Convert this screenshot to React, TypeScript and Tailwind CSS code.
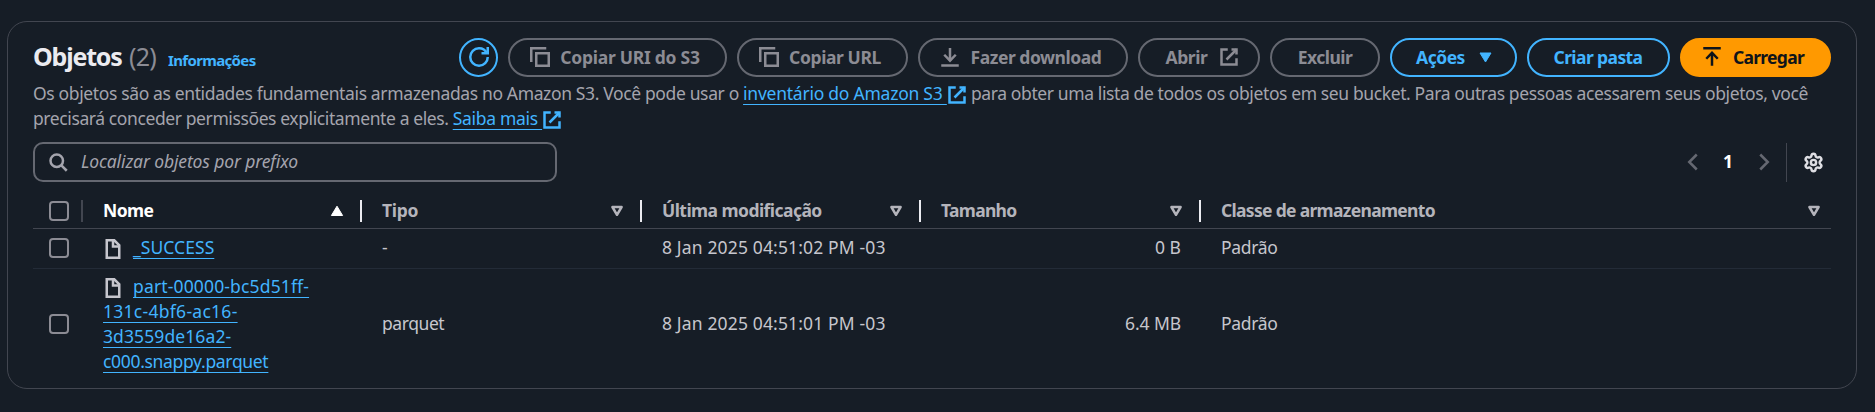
import type { ReactNode } from "react";
import { Settings } from "lucide-react";

type IconName = "refresh" | "copy" | "external" | "download" | "upload" | "search" | "file" | "left" | "right";

const iconPaths: Record<IconName, ReactNode> = {
  refresh: (
    <>
      <path d="M10 5h5V0" />
      <path d="M15 8a6.957 6.957 0 0 1-7 7 6.957 6.957 0 0 1-7-7 6.957 6.957 0 0 1 7-7 6.87 6.87 0 0 1 6.3 4" />
    </>
  ),
  copy: (
    <>
      <path d="M15 5H5v10h10V5Z" />
      <path d="M13 1H1v11" />
    </>
  ),
  external: (
    <>
      <path d="M10 2h4v4" />
      <path d="m6 10 8-8" />
      <path d="M14 9.048V14H2V2h5" />
    </>
  ),
  download: (
    <>
      <path d="M1 14.8h14" />
      <path d="M8 .8v10.4" />
      <path d="m3.4 6.2 4.6 4.7 4.6-4.7" />
    </>
  ),
  upload: (
    <>
      <path d="M1 1h14" />
      <path d="M8 15V4.6" />
      <path d="M3.4 9.4 8 4.7l4.6 4.7" />
    </>
  ),
  search: (
    <>
      <circle cx="7" cy="7" r="5" />
      <path d="m15 15-4.5-4.5" />
    </>
  ),
  file: (
    <>
      <path d="M13 15H3V1h6l4 4v10Z" />
      <path d="M8 1v5h5" />
    </>
  ),
  left: <path d="M11 2 5 8l6 6" />,
  right: <path d="m5 2 6 6-6 6" />,
};

function Icon({ name, className = "" }: { name: IconName; className?: string }) {
  return (
    <svg
      viewBox="0 0 16 16"
      fill="none"
      stroke="currentColor"
      strokeWidth="2"
      className={`size-5 shrink-0 overflow-visible ${className}`}
    >
      {iconPaths[name]}
    </svg>
  );
}

function Button({ className, children }: { className: string; children: ReactNode }) {
  return (
    <button
      className={`flex h-[39px] shrink-0 items-center justify-center rounded-full border-2 pb-px font-bold whitespace-nowrap ${className}`}
    >
      {children}
    </button>
  );
}

function Link({ className, children }: { className: string; children: ReactNode }) {
  return (
    <a
      className={`text-[#42b4ff] underline decoration-1 underline-offset-4 [text-decoration-skip-ink:none] ${className}`}
    >
      {children}
    </a>
  );
}

function Checkbox() {
  return <span className="ml-4 block size-5 rounded-[4px] border-2 border-[#8c8c94]" />;
}

function SortArrow({ active = false }: { active?: boolean }) {
  return active ? (
    <svg width="14" height="12" viewBox="0 0 14 12" fill="#fff" stroke="#fff" strokeLinejoin="round">
      <path d="M7 1.2 12.6 10.5H1.4Z" />
    </svg>
  ) : (
    <svg width="14" height="12" viewBox="0 0 14 12" fill="none" stroke="#b4b4bb" strokeWidth="2.5" strokeLinejoin="round">
      <path d="M2.4 2h9.2L7 9.8Z" />
    </svg>
  );
}

const columns = [
  { label: "Nome", track: "tracking-[-0.6px] text-white", active: true },
  { label: "Tipo", track: "tracking-[-0.3px]" },
  { label: "Última modificação", track: "tracking-[-0.55px]" },
  { label: "Tamanho", track: "tracking-[-0.7px]" },
  { label: "Classe de armazenamento", track: "tracking-[-0.69px]" },
];

const grid = "grid grid-cols-[50px_279px_280px_279px_280px_630px]";

export default function App() {
  return (
    <main className="h-[412px] w-[1875px] overflow-hidden bg-[#161d26] pt-[21px] pl-[7px] font-['Noto_Sans',sans-serif] text-[17.5px] leading-[25px] text-[#c6c6cd]">
      <section className="h-[368px] w-[1850px] rounded-[20px] border border-[#424650] pt-4 pr-[25px] pl-[25px]">
        <header className="flex h-[39px] items-center justify-between">
          <div className="flex items-baseline pb-0.5 whitespace-nowrap">
            <h2 className="w-24 text-[25px] leading-[30px] font-bold tracking-[-1.2px] text-[#ebebf0]">Objetos</h2>
            <span className="w-[39px] text-[25px] leading-[30px] tracking-[-0.8px] text-[#8c8c94]">(2)</span>
            <a className="text-[15px] font-bold tracking-[-0.65px] text-[#42b4ff]">Informações</a>
          </div>
          <div className="flex gap-2.5">
            <Button className="w-[39px] border-[#42b4ff] text-[#42b4ff]">
              <Icon name="refresh" />
            </Button>
            <Button className="w-[219px] gap-2.5 border-[#656871] pr-[5px] tracking-[-0.26px] text-[#8c8c94]">
              <Icon name="copy" />
              Copiar URI do S3
            </Button>
            <Button className="w-[171px] gap-2.5 border-[#656871] pr-[5px] tracking-[-0.4px] text-[#8c8c94]">
              <Icon name="copy" />
              Copiar URL
            </Button>
            <Button className="w-[210px] gap-[11px] border-[#656871] pr-[5px] tracking-[-0.46px] text-[#8c8c94]">
              <Icon name="download" />
              Fazer download
            </Button>
            <Button className="w-[122px] gap-[11px] border-[#656871] pl-[6px] tracking-[-0.4px] text-[#8c8c94]">
              Abrir
              <Icon name="external" />
            </Button>
            <Button className="w-[110px] border-[#656871] tracking-[-0.5px] text-[#8c8c94]">Excluir</Button>
            <Button className="w-[127px] gap-3.5 border-[#42b4ff] pl-px tracking-[-0.5px] text-[#42b4ff]">
              Ações
              <svg width="13" height="11" viewBox="0 0 13 11" fill="currentColor" stroke="currentColor" strokeLinejoin="round">
                <path d="M1 1h11L6.5 10Z" />
              </svg>
            </Button>
            <Button className="w-[143px] border-[#42b4ff] pr-px tracking-[-0.6px] text-[#42b4ff]">Criar pasta</Button>
            <Button className="w-[151px] gap-[11px] border-[#ff9900] bg-[#ff9900] pr-[5px] tracking-[-0.7px] text-[#0f141a]">
              <Icon name="upload" />
              Carregar
            </Button>
          </div>
        </header>

        <p className="mt-1 h-[50px] whitespace-nowrap text-[#a4a4ad]">
          <span className="tracking-[-0.364px]">
            Os objetos são as entidades fundamentais armazenadas no Amazon S3. Você pode usar o{" "}
          </span>
          <Link className="tracking-[-0.24px]">inventário do Amazon S3 </Link>
          <Icon name="external" className="inline align-[-5px] text-[#42b4ff]" />
          <span className="tracking-[-0.39px]">
            {" "}
            para obter uma lista de todos os objetos em seu bucket. Para outras pessoas acessarem seus objetos, você
          </span>
          <br />
          <span className="tracking-[-0.4px]">precisará conceder permissões explicitamente a eles. </span>
          <Link className="tracking-[-0.3px]">Saiba mais </Link>
          <Icon name="external" className="inline align-[-5px] text-[#42b4ff]" />
        </p>

        <div className="mt-[11px] flex h-10 items-center justify-between">
          <div className="flex h-10 w-[524px] items-center gap-[13px] rounded-[10px] border-2 border-[#656871] pb-px pl-[13px] text-[#a4a4ad] italic">
            <Icon name="search" />
            <span className="tracking-[-0.12px]">Localizar objetos por prefixo</span>
          </div>
          <div className="flex h-10 items-center">
            <Icon name="left" className="text-[#656871]" />
            <span className="w-[51px] pr-px pb-px text-center font-bold text-white">1</span>
            <Icon name="right" className="text-[#656871]" />
            <span className="ml-[12px] h-[39px] w-px bg-[#424650]" />
            <Settings size={21} strokeWidth={2.8} className="mr-[7px] ml-[16px] text-[#dedee3]" />
          </div>
        </div>

        <div className={`${grid} mt-2 h-[39px] items-center border-b border-[#424650] pt-[3px] font-bold text-[#b4b4bb]`}>
          <div className="flex h-[22px] items-center justify-between border-r-2 border-[#424650]">
            <Checkbox />
          </div>
          {columns.map((column, index) => (
            <div
              key={column.label}
              className={`flex h-[22px] items-center justify-between pl-5 ${
                index < 4 ? "border-r-2 border-[#ebebf0] pr-4" : "pr-[10px]"
              }`}
            >
              <span className={column.track}>{column.label}</span>
              <SortArrow active={column.active} />
            </div>
          ))}
        </div>

        <div className={`${grid} h-10 items-center border-b border-[#232b37] pb-0.5`}>
          <Checkbox />
          <div className="pl-5 whitespace-nowrap">
            <Icon name="file" className="mr-2.5 inline align-[-5px]" />
            <Link className="tracking-[0.05px]">_SUCCESS</Link>
          </div>
          <div className="pl-5">-</div>
          <div className="pl-5 tracking-[0.15px]">8 Jan 2025 04:51:02 PM -03</div>
          <div className="pr-5 text-right">0 B</div>
          <div className="pl-5 tracking-[-0.3px]">Padrão</div>
        </div>

        <div className={`${grid} h-[110px] items-center`}>
          <Checkbox />
          <div className="pl-5 whitespace-nowrap">
            <Icon name="file" className="mr-2.5 inline align-[-5px]" />
            <Link className="tracking-[0.15px]">part-00000-bc5d51ff-</Link>
            <br />
            <Link className="tracking-[0.28px]">131c-4bf6-ac16-</Link>
            <br />
            <Link className="tracking-[0.1px]">3d3559de16a2-</Link>
            <br />
            <Link className="tracking-[-0.32px]">c000.snappy.parquet</Link>
          </div>
          <div className="pb-px pl-5 tracking-[-0.43px]">parquet</div>
          <div className="pb-px pl-5 tracking-[0.15px]">8 Jan 2025 04:51:01 PM -03</div>
          <div className="pr-5 pb-px text-right tracking-[-0.1px]">6.4 MB</div>
          <div className="pb-px pl-5 tracking-[-0.3px]">Padrão</div>
        </div>
      </section>
    </main>
  );
}
